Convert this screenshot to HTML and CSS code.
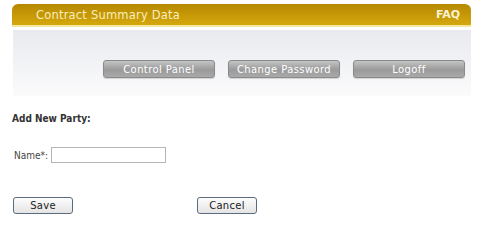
FILE: index.html
```html
<!DOCTYPE html>
<html lang="en">
  <head>
    <meta charset="UTF-8" />
    <title>Contract Summary Data</title>
    <link rel="stylesheet" href="styles.css">
  </head>
  <body>
    <div class="page">
      <div class="titlebar">
        <span class="title">Contract Summary Data</span>
        <a class="faq" href="#">FAQ</a>
      </div>
      <div class="toolbar">
        <a class="navbtn" href="#">Control Panel</a>
        <a class="navbtn" href="#">Change Password</a>
        <a class="navbtn" href="#">Logoff</a>
      </div>
    </div>

    <form class="party-form">
      <h3 class="form-title">Add New Party:</h3>
      <div class="field">
        <label for="name">Name*:</label>
        <input type="text" id="name" />
      </div>
      <div class="actions">
        <button type="button" class="btn">Save</button>
        <button type="button" class="btn">Cancel</button>
      </div>
    </form>
  </body>
</html>
```

FILE: styles.css
```css
body {
  margin: 0;
  font-family: "DejaVu Sans", Verdana, sans-serif;
  font-size: 11px;
  color: #333;
  background: #fff;
}

.page {
  margin: 4px 9px 0 12px;
}

.titlebar {
  display: flex;
  justify-content: space-between;
  align-items: center;
  height: 21px;
  padding: 0 11px 0 24px;
  background: linear-gradient(#b68800, #d5a70e);
  border-radius: 6px 6px 0 0;
  border-bottom: 2px solid #f4e7a0;
}

.title {
  color: #f8eeb8;
  font-size: 11.5px;
  letter-spacing: 0.2px;
}

.faq {
  color: #fbf3d2;
  font-weight: bold;
  font-size: 11px;
  text-decoration: none;
}

.toolbar {
  display: flex;
  justify-content: flex-end;
  gap: 13px;
  margin: 3px 0 0 1px;
  height: 66px;
  padding: 30px 6px 0 0;
  box-sizing: border-box;
  background: linear-gradient(#e8eaee, #fbfbfc);
}

.navbtn {
  display: block;
  width: 112px;
  height: 18px;
  line-height: 17px;
  text-align: center;
  color: #fff;
  font-size: 10px;
  letter-spacing: 0.4px;
  text-decoration: none;
  box-sizing: border-box;
  border: 1px solid #8a8a8a;
  border-radius: 3px;
  background: linear-gradient(#c4c4c4, #9a9a9a 55%, #a9a9a9);
  box-shadow: 0 1px 1px rgba(0, 0, 0, 0.15);
}

.party-form {
  padding: 0 12px;
  font-family: "DejaVu Sans Condensed", "DejaVu Sans", sans-serif;
}

.form-title {
  margin: 17px 0 0;
  font-size: 10px;
  font-weight: bold;
  color: #333;
}

.field {
  display: flex;
  align-items: center;
  gap: 3px;
  margin: 23px 0 0 2px;
}

.field label {
  font-size: 10px;
  color: #444;
}

.field input {
  width: 115px;
  height: 16px;
  box-sizing: border-box;
  border: 1px solid #b5b5b5;
  padding: 0 2px;
  margin: 0;
}

.actions {
  display: flex;
  gap: 124px;
  margin: 34px 0 0 1px;
}

.btn {
  width: 60px;
  height: 17px;
  padding: 0;
  font-family: "DejaVu Sans", Verdana, sans-serif;
  font-size: 10px;
  letter-spacing: 0.3px;
  color: #222;
  border: 1px solid #5b6b80;
  border-radius: 3px;
  background: linear-gradient(#fdfdfd, #e4e4e4);
}
```
